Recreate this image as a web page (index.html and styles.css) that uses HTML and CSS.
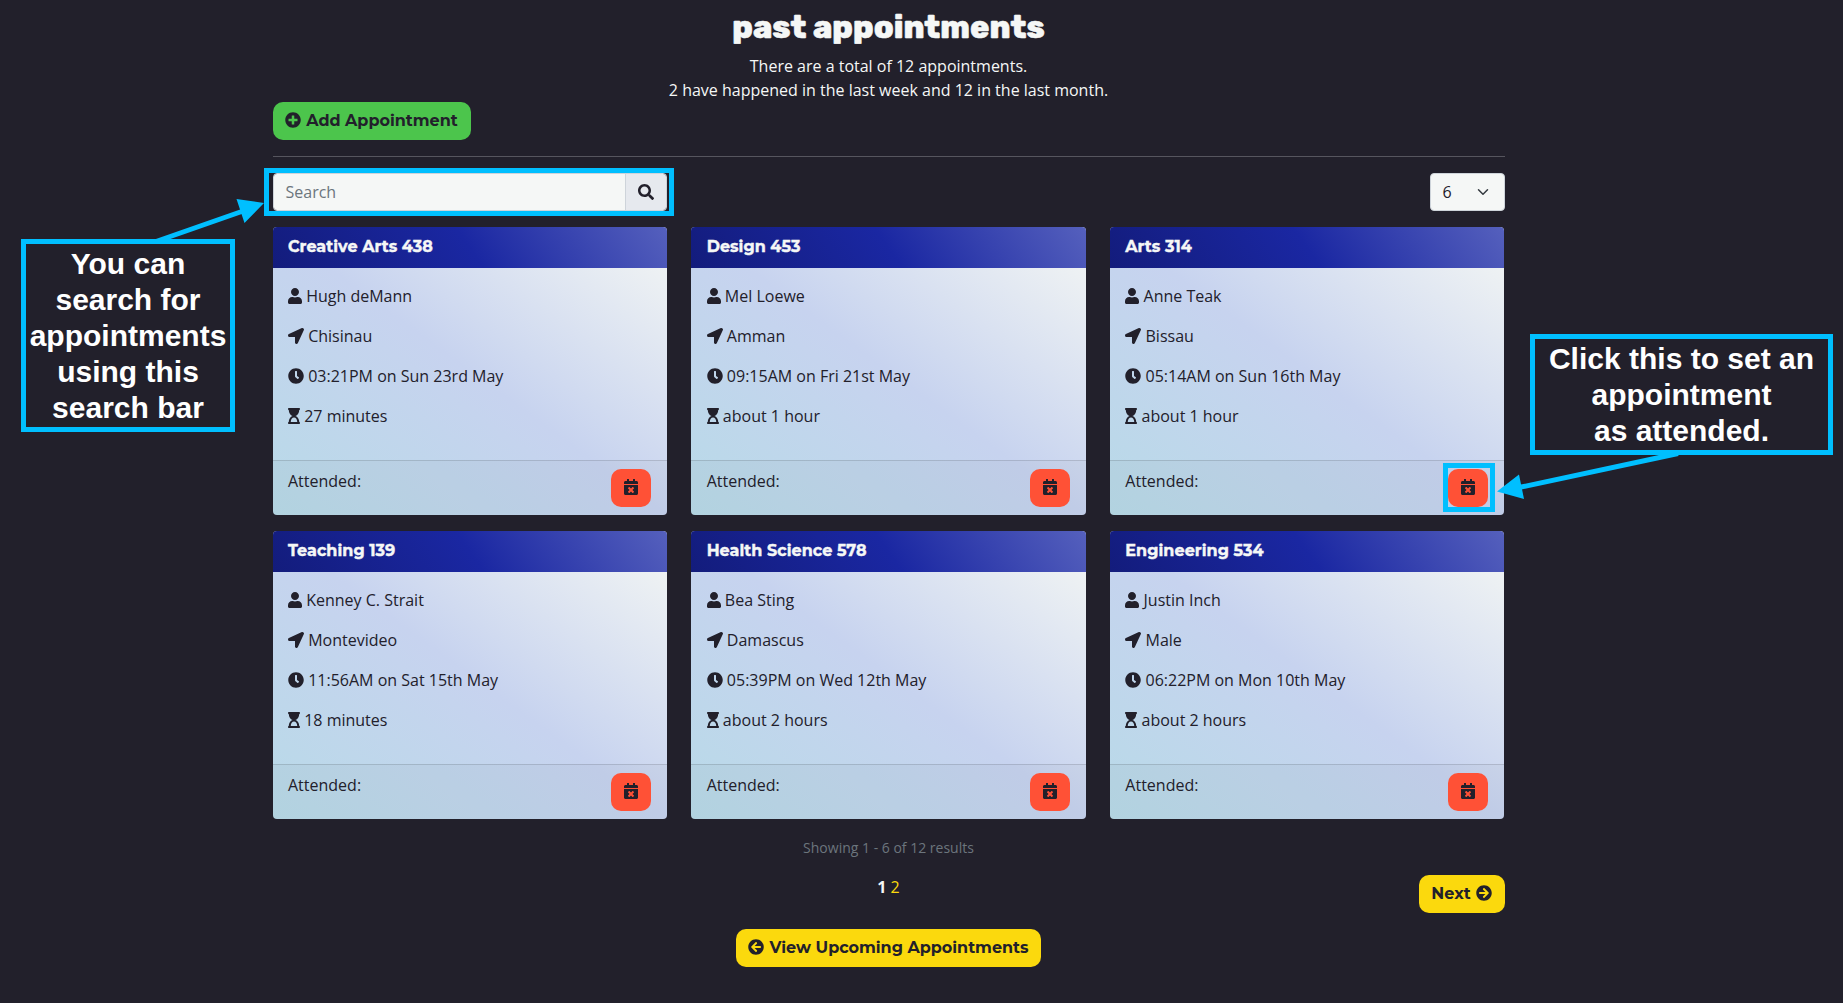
FILE: index.html
```html
<!DOCTYPE html>
<html lang="en">
<head>
<meta charset="utf-8">
<title>Past appointments</title>
<link rel="stylesheet" href="styles.css">
</head>
<body>
<svg class="sprite" aria-hidden="true">
  <symbol id="user" viewBox="0 0 448 512"><path d="M224 256c70.7 0 128-57.3 128-128S294.7 0 224 0 96 57.3 96 128s57.3 128 128 128zm89.6 32h-16.7c-22.2 10.2-46.9 16-72.9 16s-50.6-5.8-72.9-16h-16.7C60.2 288 0 348.2 0 422.4V464c0 26.5 21.5 48 48 48h352c26.5 0 48-21.5 48-48v-41.6c0-74.2-60.2-134.4-134.4-134.4z"/></symbol>
  <symbol id="place" viewBox="0 0 512 512"><path d="M444.52 3.52L28.74 195.42c-47.97 22.39-31.98 92.75 19.19 92.75h175.91v175.91c0 51.17 70.36 67.17 92.75 19.19l191.9-415.78c15.99-38.39-25.59-79.97-63.97-63.97z"/></symbol>
  <symbol id="clock" viewBox="0 0 512 512"><path d="M256,8C119,8,8,119,8,256S119,504,256,504,504,393,504,256,393,8,256,8Zm92.49,313h0l-20,25a16,16,0,0,1-22.49,2.5h0l-67-49.72a40,40,0,0,1-15-31.23V112a16,16,0,0,1,16-16h32a16,16,0,0,1,16,16V256l58,42.5A16,16,0,0,1,348.49,321Z"/></symbol>
  <symbol id="hourglass" viewBox="0 0 384 512"><path d="M360 0H24C10.745 0 0 10.745 0 24v16c0 13.255 10.745 24 24 24 0 90.965 51.016 167.734 120.842 192C75.016 280.266 24 357.035 24 448c-13.255 0-24 10.745-24 24v16c0 13.255 10.745 24 24 24h336c13.255 0 24-10.745 24-24v-16c0-13.255-10.745-24-24-24 0-90.965-51.016-167.734-120.842-192C308.984 231.734 360 154.965 360 64c13.255 0 24-10.745 24-24V24c0-13.255-10.745-24-24-24zm-64 448H88c0-77.458 46.204-144 104-144 57.786 0 104 66.517 104 144z"/></symbol>
  <symbol id="plus" viewBox="0 0 512 512"><path d="M256 8C119 8 8 119 8 256s111 248 248 248 248-111 248-248S393 8 256 8zm144 276c0 6.6-5.4 12-12 12h-92v92c0 6.6-5.4 12-12 12h-56c-6.6 0-12-5.4-12-12v-92h-92c-6.6 0-12-5.4-12-12v-56c0-6.6 5.4-12 12-12h92v-92c0-6.6 5.4-12 12-12h56c6.6 0 12 5.4 12 12v92h92c6.6 0 12 5.4 12 12v56z"/></symbol>
  <symbol id="search" viewBox="0 0 512 512"><path d="M505 442.7L405.3 343c-4.5-4.5-10.6-7-17-7H372c27.6-35.3 44-79.7 44-128C416 93.1 322.9 0 208 0S0 93.1 0 208s93.1 208 208 208c48.3 0 92.7-16.4 128-44v16.3c0 6.4 2.5 12.5 7 17l99.7 99.7c9.4 9.4 24.6 9.4 33.9 0l28.3-28.3c9.4-9.4 9.4-24.6.1-34zM208 336c-70.7 0-128-57.2-128-128 0-70.7 57.2-128 128-128 70.7 0 128 57.2 128 128 0 70.7-57.2 128-128 128z"/></symbol>
  <symbol id="arrow" viewBox="0 0 512 512"><path d="M256 8c137 0 248 111 248 248S393 504 256 504 8 393 8 256 119 8 256 8zm-28.9 143.6l75.5 72.4H120c-13.3 0-24 10.7-24 24v16c0 13.3 10.7 24 24 24h182.6l-75.5 72.4c-9.7 9.3-9.9 24.8-.4 34.3l11 10.9c9.4 9.4 24.6 9.4 33.9 0L404.3 273c9.4-9.4 9.4-24.6 0-33.9L271.6 106.3c-9.4-9.4-24.6-9.4-33.9 0l-11 10.9c-9.5 9.6-9.3 25.1.4 34.4z"/></symbol>
  <symbol id="calendar" viewBox="0 0 448 512"><path d="M436 160H12c-6.6 0-12-5.4-12-12v-36c0-26.5 21.5-48 48-48h48V12c0-6.6 5.4-12 12-12h40c6.6 0 12 5.4 12 12v52h128V12c0-6.6 5.4-12 12-12h40c6.6 0 12 5.4 12 12v52h48c26.5 0 48 21.5 48 48v36c0 6.6-5.4 12-12 12zM12 192h424c6.6 0 12 5.4 12 12v260c0 26.5-21.5 48-48 48H48c-26.5 0-48-21.5-48-48V204c0-6.6 5.4-12 12-12zm257.3 160l48.1-48.1c4.7-4.7 4.7-12.3 0-17l-28.3-28.3c-4.7-4.7-12.3-4.7-17 0L224 306.7l-48.1-48.1c-4.7-4.7-12.3-4.7-17 0l-28.3 28.3c-4.7 4.7-4.7 12.3 0 17l48.1 48.1-48.1 48.1c-4.7 4.7-4.7 12.3 0 17l28.3 28.3c4.7 4.7 12.3 4.7 17 0l48.1-48.1 48.1 48.1c4.7 4.7 12.3 4.7 17 0l28.3-28.3c4.7-4.7 4.7-12.3 0-17L269.3 352z"/></symbol>
</svg>

<main class="container">
  <header class="intro">
    <h1 class="title">past appointments</h1>
    <p class="summary">There are a total of 12 appointments.<br>2 have happened in the last week and 12 in the last month.</p>
  </header>
  <div class="actions"><a class="btn btn-add"><svg class="icon"><use href="#plus"/></svg><span>Add Appointment</span></a></div>
  <hr class="rule">
  <div class="toolbar">
    <div class="search">
      <div class="search-input">Search</div>
      <div class="search-btn"><svg class="icon"><use href="#search"/></svg></div>
    </div>
    <div class="select"><span>6</span><svg class="chevron" viewBox="0 0 16 16"><path d="M2 5l6 6 6-6"/></svg></div>
  </div>

  <section class="cards">
    <article class="card">
      <h2 class="card-header">Creative Arts 438</h2>
      <div class="card-body">
        <p class="row"><svg class="icon user"><use href="#user"/></svg>Hugh deMann</p>
        <p class="row"><svg class="icon"><use href="#place"/></svg>Chisinau</p>
        <p class="row"><svg class="icon"><use href="#clock"/></svg>03:21PM on Sun 23rd May</p>
        <p class="row"><svg class="icon glass"><use href="#hourglass"/></svg>27 minutes</p>
      </div>
      <div class="card-footer"><span>Attended:</span><a class="btn btn-mark"><svg class="icon user"><use href="#calendar"/></svg></a></div>
    </article>
    <article class="card">
      <h2 class="card-header">Design 453</h2>
      <div class="card-body">
        <p class="row"><svg class="icon user"><use href="#user"/></svg>Mel Loewe</p>
        <p class="row"><svg class="icon"><use href="#place"/></svg>Amman</p>
        <p class="row"><svg class="icon"><use href="#clock"/></svg>09:15AM on Fri 21st May</p>
        <p class="row"><svg class="icon glass"><use href="#hourglass"/></svg>about 1 hour</p>
      </div>
      <div class="card-footer"><span>Attended:</span><a class="btn btn-mark"><svg class="icon user"><use href="#calendar"/></svg></a></div>
    </article>
    <article class="card">
      <h2 class="card-header">Arts 314</h2>
      <div class="card-body">
        <p class="row"><svg class="icon user"><use href="#user"/></svg>Anne Teak</p>
        <p class="row"><svg class="icon"><use href="#place"/></svg>Bissau</p>
        <p class="row"><svg class="icon"><use href="#clock"/></svg>05:14AM on Sun 16th May</p>
        <p class="row"><svg class="icon glass"><use href="#hourglass"/></svg>about 1 hour</p>
      </div>
      <div class="card-footer"><span>Attended:</span><a class="btn btn-mark"><svg class="icon user"><use href="#calendar"/></svg></a></div>
    </article>
    <article class="card">
      <h2 class="card-header">Teaching 139</h2>
      <div class="card-body">
        <p class="row"><svg class="icon user"><use href="#user"/></svg>Kenney C. Strait</p>
        <p class="row"><svg class="icon"><use href="#place"/></svg>Montevideo</p>
        <p class="row"><svg class="icon"><use href="#clock"/></svg>11:56AM on Sat 15th May</p>
        <p class="row"><svg class="icon glass"><use href="#hourglass"/></svg>18 minutes</p>
      </div>
      <div class="card-footer"><span>Attended:</span><a class="btn btn-mark"><svg class="icon user"><use href="#calendar"/></svg></a></div>
    </article>
    <article class="card">
      <h2 class="card-header">Health Science 578</h2>
      <div class="card-body">
        <p class="row"><svg class="icon user"><use href="#user"/></svg>Bea Sting</p>
        <p class="row"><svg class="icon"><use href="#place"/></svg>Damascus</p>
        <p class="row"><svg class="icon"><use href="#clock"/></svg>05:39PM on Wed 12th May</p>
        <p class="row"><svg class="icon glass"><use href="#hourglass"/></svg>about 2 hours</p>
      </div>
      <div class="card-footer"><span>Attended:</span><a class="btn btn-mark"><svg class="icon user"><use href="#calendar"/></svg></a></div>
    </article>
    <article class="card">
      <h2 class="card-header">Engineering 534</h2>
      <div class="card-body">
        <p class="row"><svg class="icon user"><use href="#user"/></svg>Justin Inch</p>
        <p class="row"><svg class="icon"><use href="#place"/></svg>Male</p>
        <p class="row"><svg class="icon"><use href="#clock"/></svg>06:22PM on Mon 10th May</p>
        <p class="row"><svg class="icon glass"><use href="#hourglass"/></svg>about 2 hours</p>
      </div>
      <div class="card-footer"><span>Attended:</span><a class="btn btn-mark"><svg class="icon user"><use href="#calendar"/></svg></a></div>
    </article>
  </section>

  <p class="results">Showing 1 - 6 of 12 results</p>
  <nav class="pager">
    <span class="pages"><b>1</b> <a class="page">2</a></span>
    <a class="btn btn-next"><span>Next</span><svg class="icon"><use href="#arrow"/></svg></a>
  </nav>
  <div class="upcoming"><a class="btn btn-upcoming"><svg class="icon flip"><use href="#arrow"/></svg><span>View Upcoming Appointments</span></a></div>
</main>

<div class="frame frame-search"></div>
<div class="frame frame-mark"></div>
<svg class="arrows" viewBox="0 0 1843 1003">
  <path class="shaft" d="M156 241.500L246 210M1678 453.500L1520 487.300"/>
  <path class="head" d="M264 203l-27.500-4 8 24zM1497 491.500l22-17 5 24.500z"/>
</svg>
<div class="frame note note-search">You can<br>search for<br>appointments<br>using this<br>search bar</div>
<div class="frame note note-mark">Click this to set an<br>appointment<br>as attended.</div>
</body>
</html>
```
FILE: styles.css
```css
* { box-sizing: border-box; }
body {
  margin: 0;
  height: 1003px;
  overflow: hidden;
  position: relative;
  background: #22202b;
  color: #f5f7f6;
  font: 16px/24px "Open Sans", sans-serif;
}
.sprite { display: none; }
.container { width: 1232px; margin-left: 272.5px; padding-top: 8px; }
.intro { text-align: center; }
.title {
  margin: 0 0 8px;
  font: 800 32px/38px Rubik, Inter, sans-serif;
  -webkit-text-stroke: 0.5px currentColor;
}
.summary { margin: 0; }
.icon { width: 16px; height: 16px; fill: currentColor; flex: none; }
.icon.user { width: 14px; }
.icon.glass { width: 12px; }
.icon.flip { transform: scaleX(-1); }
.btn {
  display: inline-flex;
  align-items: center;
  justify-content: center;
  gap: 5px;
  height: 38px;
  border-radius: 10px;
  color: #22202b;
  font: 700 16px/24px Montserrat, Inter, sans-serif;
  white-space: nowrap;
}
.btn .icon { margin-bottom: 2px; }
.actions { display: flex; }
.btn-add { width: 198px; background: #4cc54c; }
.rule { margin: 16px 0; border: 0; height: 1px; background: #56555e; }
.toolbar { display: flex; justify-content: space-between; margin-bottom: 16px; }
.search { display: flex; width: 394px; height: 38px; border: 1px solid #ced4da; border-radius: 4px; overflow: hidden; }
.search-input { flex: 1; padding: 6px 12px; background: #f5f7f6; color: #6c757d; }
.search-btn { width: 41px; display: flex; align-items: center; justify-content: center; background: #e6e9ee; color: #22202b; border-left: 1px solid #ced4da; }
.select { display: flex; justify-content: space-between; align-items: center; width: 75px; height: 38px; padding: 0 15px 0 12px; border: 1px solid #ced4da; border-radius: 4px; background: #f5f7f6; color: #22202b; }
.chevron { width: 12px; height: 12px; fill: none; stroke: #343a40; stroke-width: 2; stroke-linecap: round; stroke-linejoin: round; }
.cards { display: grid; grid-template-columns: repeat(3, 1fr); gap: 16px 24px; }
.card { height: 288px; border-radius: 4px; overflow: hidden; color: #22202b; background: linear-gradient(to top right, #b8dae8, #c7d3ef, #f5f7f4); }
.card-header {
  margin: 0;
  height: 41px;
  padding: 8px 15.5px 9px;
  color: #f5f7f6;
  font: 700 16px/24px Montserrat, Inter, sans-serif;
  letter-spacing: 0.04px;
  -webkit-text-stroke: 0.4px currentColor;
  background: linear-gradient(55deg, #131c7c, #1a27a2, #5560bd);
}
.card-body { height: 192px; padding: 16px 15.5px; }
.row { display: flex; align-items: center; gap: 4.2px; margin: 0 0 16px; }
.card-footer { display: flex; justify-content: space-between; height: 55px; padding: 8px 16px 8px 15.5px; border-top: 1px solid rgba(0,0,0,.125); background: rgba(0,0,0,.03); }
.btn-mark { width: 40px; background: #ff5136; }
.results { margin: 17px 0 12px; text-align: center; font-size: 14px; color: #6c757d; }
.pager { display: grid; grid-template-columns: 1fr auto 1fr; height: 38px; margin-top: 15px; }
.pages { grid-column: 2; }
.page { color: #fbd90d; }
.btn-next { grid-column: 3; justify-self: end; width: 86px; background: #fbd90d; }
.upcoming { display: flex; justify-content: center; margin-top: 16px; }
.btn-upcoming { width: 305px; background: #fbd90d; }

/* Help annotations drawn over the page */
.frame { position: absolute; border: 5px solid #00bfff; }
.frame-search { left: 264px; top: 168px; width: 410px; height: 48px; }
.frame-mark { left: 1443px; top: 463px; width: 52px; height: 49px; }
.arrows { position: absolute; left: 0; top: 0; width: 1843px; height: 1003px; }
.shaft { fill: none; stroke: #00bfff; stroke-width: 5; }
.head { fill: #00bfff; }
.note { padding-top: 2px; background: #22202b; color: #fff; text-align: center; white-space: nowrap; font: 700 30px/36px "Liberation Sans", sans-serif; }
.note-search { left: 21px; top: 239px; width: 214px; height: 193px; }
.note-mark { left: 1530px; top: 334px; width: 303px; height: 121px; }
```
